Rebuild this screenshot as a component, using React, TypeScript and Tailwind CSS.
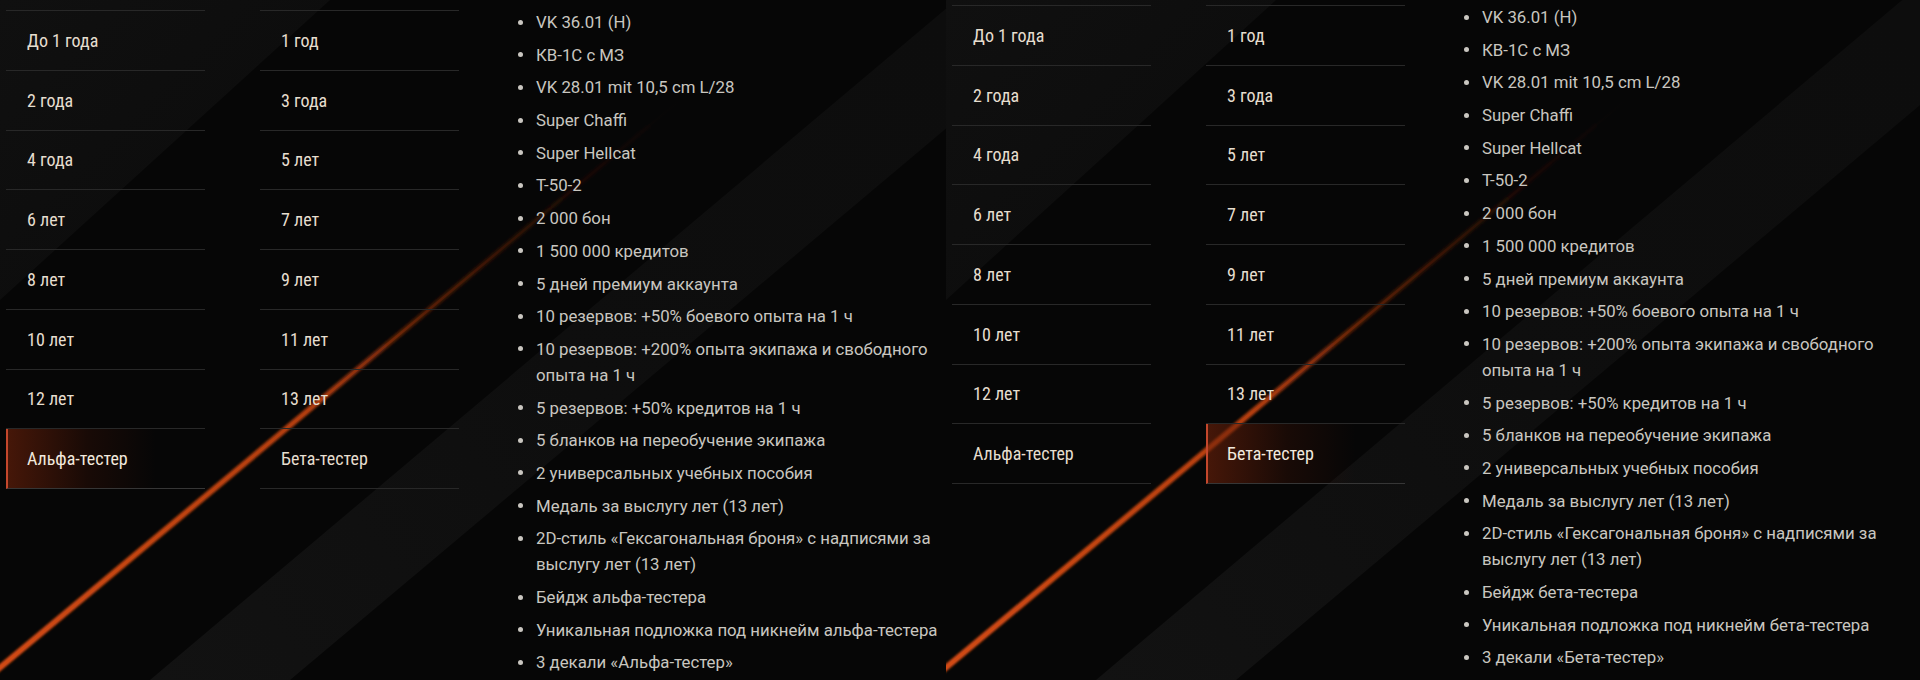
import React from 'react';

const leftTabs = ['До 1 года', '2 года', '4 года', '6 лет', '8 лет', '10 лет', '12 лет', 'Альфа-тестер'];
const rightTabs = ['1 год', '3 года', '5 лет', '7 лет', '9 лет', '11 лет', '13 лет', 'Бета-тестер'];

const common = [
  'VK 36.01 (H)',
  'КВ-1С с МЗ',
  'VK 28.01 mit 10,5 cm L/28',
  'Super Chaffi',
  'Super Hellcat',
  'Т-50-2',
  '2 000 бон',
  '1 500 000 кредитов',
  '5 дней премиум аккаунта',
  '10 резервов: +50% боевого опыта на 1 ч',
  '10 резервов: +200% опыта экипажа и свободного опыта на 1 ч',
  '5 резервов: +50% кредитов на 1 ч',
  '5 бланков на переобучение экипажа',
  '2 универсальных учебных пособия',
  'Медаль за выслугу лет (13 лет)',
  '2D-стиль «Гексагональная броня» с надписями за выслугу лет (13 лет)',
];

const alphaRewards = [
  ...common,
  'Бейдж альфа-тестера',
  'Уникальная подложка под никнейм альфа-тестера',
  '3 декали «Альфа-тестер»',
];

const betaRewards = [
  ...common,
  'Бейдж бета-тестера',
  'Уникальная подложка под никнейм бета-тестера',
  '3 декали «Бета-тестер»',
];

function Backdrop({ id }: { id: string }) {
  return (
    <svg
      className="absolute left-0 top-0 pointer-events-none"
      width={980}
      height={680}
      viewBox="0 0 980 680"
    >
      <defs>
        <linearGradient id={`${id}-line`} gradientUnits="userSpaceOnUse" x1="0" y1="668" x2="680" y2="100">
          <stop offset="0" stopColor="#d04a14" stopOpacity="1" />
          <stop offset="0.45" stopColor="#b23e0f" stopOpacity="0.9" />
          <stop offset="0.62" stopColor="#7e2a0a" stopOpacity="0.45" />
          <stop offset="0.85" stopColor="#4a1905" stopOpacity="0.15" />
          <stop offset="1" stopColor="#3a1404" stopOpacity="0" />
        </linearGradient>
        <linearGradient id={`${id}-corner`} gradientUnits="userSpaceOnUse" x1="0" y1="0" x2="300" y2="300">
          <stop offset="0" stopColor="#101010" />
          <stop offset="1" stopColor="#0b0b0b" />
        </linearGradient>
        <linearGradient id={`${id}-band`} gradientUnits="userSpaceOnUse" x1="150" y1="680" x2="980" y2="60">
          <stop offset="0" stopColor="#121212" />
          <stop offset="0.5" stopColor="#0e0e0e" />
          <stop offset="1" stopColor="#0d0d0d" />
        </linearGradient>
        <filter id={`${id}-glow`} x="-10%" y="-10%" width="120%" height="120%">
          <feGaussianBlur stdDeviation="1.2" />
        </filter>
      </defs>
      <rect width="980" height="680" fill="#060606" />
      <polygon points="0,0 330,0 0,300" fill={`url(#${id}-corner)`} />
      <polygon points="150,680 290,680 980,100 980,-20" fill={`url(#${id}-band)`} />
      <line
        x1="-4"
        y1="671"
        x2="680"
        y2="100"
        stroke={`url(#${id}-line)`}
        strokeWidth="6"
        filter={`url(#${id}-glow)`}
      />
      <line x1="-4" y1="671" x2="680" y2="100" stroke={`url(#${id}-line)`} strokeWidth="2.5" />
    </svg>
  );
}

function TabColumn({ items, active }: { items: string[]; active: string }) {
  return (
    <div className="w-[199px] shrink-0 border-t border-[#282828]">
      {items.map((t) => {
        const isActive = t === active;
        return (
          <div
            key={t}
            className={
              isActive
                ? 'h-[59.75px] flex items-center pl-[19px] border-b border-[#363636] border-l-2 border-l-[#c4472c] bg-[linear-gradient(90deg,rgba(112,34,10,0.6)_0%,rgba(60,18,6,0.35)_40%,rgba(0,0,0,0)_75%)] text-[#f2e9dd]'
                : 'h-[59.75px] flex items-center pl-[21px] border-b border-[#282828] text-[#e6decf]'
            }
          >
            <span className="text-[18px] font-normal font-['Roboto_Condensed','DejaVu_Sans_Condensed','Liberation_Sans_Narrow',Roboto,sans-serif]">
              {t}
            </span>
          </div>
        );
      })}
    </div>
  );
}

function RewardList({ items }: { items: string[] }) {
  return (
    <ul className="w-[434px] shrink-0 flex flex-col gap-[6.7px] font-['Roboto',sans-serif] text-[16.8px] leading-[26px] text-[#c9c6c0]">
      {items.map((r) => (
        <li key={r} className="flex">
          <span className="w-[22px] shrink-0 pt-[10.5px] pl-[4px]">
            <span className="block w-[5px] h-[5px] rounded-full bg-[#c9c6c0]" />
          </span>
          <span className="w-[412px]">{r}</span>
        </li>
      ))}
    </ul>
  );
}

function Panel({
  id,
  left,
  right,
  active,
  rewards,
  wide,
}: {
  id: string;
  left: string[];
  right: string[];
  active: string;
  rewards: string[];
  wide?: boolean;
}) {
  return (
    <div className={`relative overflow-hidden h-[680px] ${wide ? 'flex-1' : 'w-[946px] shrink-0'}`}>
      <Backdrop id={id} />
      <div className={`relative flex pl-[6px] ${wide ? 'pt-[5px]' : 'pt-[10px]'}`}>
        <TabColumn items={left} active={active} />
        <div className="ml-[55px] shrink-0">
          <TabColumn items={right} active={active} />
        </div>
        <div className="ml-[55px] -mt-[1px] shrink-0">
          <RewardList items={rewards} />
        </div>
      </div>
    </div>
  );
}

export default function App() {
  return (
    <div className="w-[1920px] h-[680px] flex bg-[#060606] overflow-hidden">
      <Panel id="a" left={leftTabs} right={rightTabs} active="Альфа-тестер" rewards={alphaRewards} />
      <Panel id="b" left={leftTabs} right={rightTabs} active="Бета-тестер" rewards={betaRewards} wide />
    </div>
  );
}
